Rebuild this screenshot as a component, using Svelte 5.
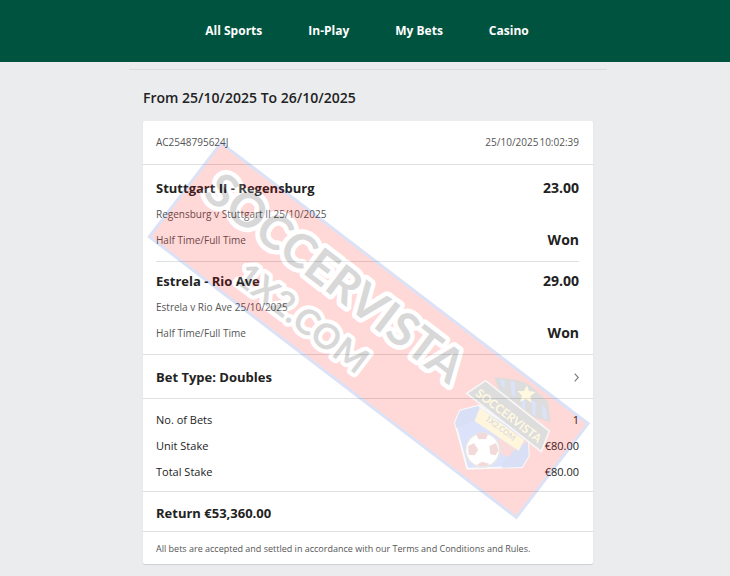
<script>
  const nav = ['All Sports', 'In-Play', 'My Bets', 'Casino'];

  const selections = [
    { name: 'Stuttgart II - Regensburg', odds: '23.00', event: 'Regensburg v Stuttgart II 25/10/2025', market: 'Half Time/Full Time', result: 'Won' },
    { name: 'Estrela - Rio Ave', odds: '29.00', event: 'Estrela v Rio Ave 25/10/2025', market: 'Half Time/Full Time', result: 'Won' }
  ];

  const stakes = [
    { label: 'No. of Bets', value: '1' },
    { label: 'Unit Stake', value: '€80.00' },
    { label: 'Total Stake', value: '€80.00' }
  ];
</script>

<header>
  <nav>
    {#each nav as item}
      <a href="#top">{item}</a>
    {/each}
  </nav>
</header>

<main>
  <h1>From 25/10/2025 To 26/10/2025</h1>

  <article class="card">
    <div class="row receipt">
      <span>AC2548795624J</span>
      <span class="stamp"><span>25/10/2025</span><span>10:02:39</span></span>
    </div>

    <div class="selections">
      {#each selections as s}
        <section class="selection">
          <div class="row title">
            <h2>{s.name}</h2>
            <strong>{s.odds}</strong>
          </div>
          <p class="event">{s.event}</p>
          <div class="row market">
            <span>{s.market}</span>
            <strong>{s.result}</strong>
          </div>
        </section>
      {/each}
    </div>

    <button type="button" class="row bet-type">
      Bet Type: Doubles
      <svg class="chevron" viewBox="0 0 5 9" aria-hidden="true">
        <path d="M0.7 0.7l3.6 3.8-3.6 3.8" fill="none" stroke="#777" stroke-width="1.1" />
      </svg>
    </button>

    <dl class="stakes">
      {#each stakes as s}
        <div class="row">
          <dt>{s.label}</dt>
          <dd>{s.value}</dd>
        </div>
      {/each}
    </dl>

    <div class="return">Return €53,360.00</div>
    <p class="terms">All bets are accepted and settled in accordance with our Terms and Conditions and Rules.</p>

    <svg class="watermark" viewBox="0 0 450 443" aria-hidden="true">
      <g transform="translate(78 22) rotate(37.4)">
        <rect width="462" height="118" fill="#ff0000" stroke="#1c46c8" stroke-width="3" />
        <g class="mark-text">
          <text x="17" y="54" font-size="47" stroke-width="9">SOCCERVISTA</text>
          <text x="93" y="102" font-size="35" stroke-width="8">1X2.COM</text>
        </g>
      </g>

      <g transform="translate(297 239) scale(0.3333)">
        <path d="M116 137L60 152 45 188 82 326 246 321 266 288 264 235z" fill="#1746d8" stroke="#ddd" stroke-width="6" />
        <path d="M116 137l-56 15-15 36 4 16 60-24zM264 235l2 53-20 33-60 2 20-62z" fill="#0a35c0" />
        <path d="M190 195l76 50-40 22-20 25-45-20z" fill="#e11418" />
        <path d="M163 52l70 8 36 15 55 50 8 62-50-15-105-80z" fill="#222" />
        <path d="M180 58l14 4 0 26-11-12zM212 62l13 4 0 48-11-12zM245 114l11 9 0 28-11-10zM276 117l12 12-2 42-10-10zM306 135l11 10 4 34-13-6z" fill="#1746d8" />
        <path d="M261 76l6 17 20 3-16 12 4 20-17-11-18 8 6-18-13-14 19 0z" fill="#ffd83a" />
        <path d="M120 143L252 240 236 272 104 183z" fill="#ffc81e" stroke="#999" stroke-width="2" />
        <path d="M137 62L80 100 304 275 328 213z" fill="#222" stroke="#ccc" stroke-width="5" />
        <g class="badge-text">
          <text x="104" y="105" font-size="36" fill="#ffd83a" transform="rotate(37.4 104 105)">SOCCERVISTA</text>
          <text x="134" y="179" font-size="24" fill="#222" transform="rotate(37.4 134 179)">1X2.COM</text>
        </g>
        <circle cx="128" cy="270" r="51" fill="#fff" stroke="#666" stroke-width="5" />
        <path d="M108 223q18-9 36 0l-6 14-22 1zM84 258l18-8 13 19-11 17-18-2zM148 258l20-9 8 22-9 15-16-3zM110 314l17-9 22 7-10 7-18 0z" fill="#b01018" />
      </g>
    </svg>
  </article>
</main>

<style>
  :global(body) {
    background: #ebecee;
    color: #222;
    font-family: 'Open Sans', 'Noto Sans', sans-serif;
  }
  h1, h2, p, dl, dd {
    margin: 0;
  }
  header {
    background: #00543f;
    padding: 20px 0 20px 4px;
  }
  nav {
    display: flex;
    justify-content: center;
    gap: 46px;
  }
  nav a {
    color: #fff;
    font-size: 12px;
    font-weight: 700;
    line-height: 22px;
    text-decoration: none;
  }
  main {
    box-sizing: border-box;
    max-width: 478px;
    margin: 7px auto 12px;
    padding: 0 14px;
    border-top: 1px solid #dadbdd;
    position: relative;
    left: 3px;
  }
  h1 {
    padding: 18px 0 13px;
    font-size: 14px;
    font-weight: 600;
    line-height: 20px;
  }
  .card {
    position: relative;
    background: #fff;
    border-radius: 2px;
    box-shadow: 0 1px 1px #cfd1d2;
  }
  .row {
    display: flex;
    justify-content: space-between;
    align-items: center;
  }
  .receipt {
    padding: 11px 14px 12px 13px;
    border-bottom: 1px solid #dfe0e1;
    color: #555;
    font-size: 10px;
    line-height: 20px;
  }
  .stamp {
    display: flex;
    gap: 1px;
  }
  .selections {
    padding: 0 14px 0 13px;
  }
  .selection {
    padding: 10px 0 8px;
    line-height: 26px;
  }
  .selection + .selection {
    padding-top: 6px;
    border-top: 1px solid #dfe0e1;
  }
  h2 {
    font-size: 13px;
    font-weight: 700;
  }
  strong {
    font-size: 14px;
    font-weight: 700;
  }
  .event, .market span {
    color: #555;
    font-size: 10px;
  }
  .bet-type {
    width: 100%;
    padding: 11px 14px 10px 13px;
    border: 0;
    border-top: 1px solid #dfe0e1;
    border-bottom: 1px solid #dfe0e1;
    background: none;
    color: inherit;
    font: 700 13px/22px 'Open Sans', 'Noto Sans', sans-serif;
    cursor: pointer;
  }
  .chevron {
    width: 5px;
    height: 9px;
  }
  .stakes {
    padding: 8px 14px 6px 13px;
    font-size: 11px;
    line-height: 26px;
  }
  .return {
    padding: 11px 13px 8px;
    border-top: 1px solid #dfe0e1;
    border-bottom: 1px solid #dfe0e1;
    font-size: 13px;
    font-weight: 700;
    line-height: 20px;
  }
  .terms {
    padding: 9px 13px 7px;
    color: #555;
    font-size: 9px;
    line-height: 16px;
  }
  .watermark {
    position: absolute;
    top: 0;
    left: 0;
    width: 100%;
    opacity: 0.15;
    pointer-events: none;
  }
  .mark-text, .badge-text {
    font-family: 'Liberation Sans Narrow', Lato, sans-serif;
    font-weight: 700;
  }
  .mark-text {
    stroke: #fff;
    stroke-linejoin: round;
    paint-order: stroke;
  }
</style>
